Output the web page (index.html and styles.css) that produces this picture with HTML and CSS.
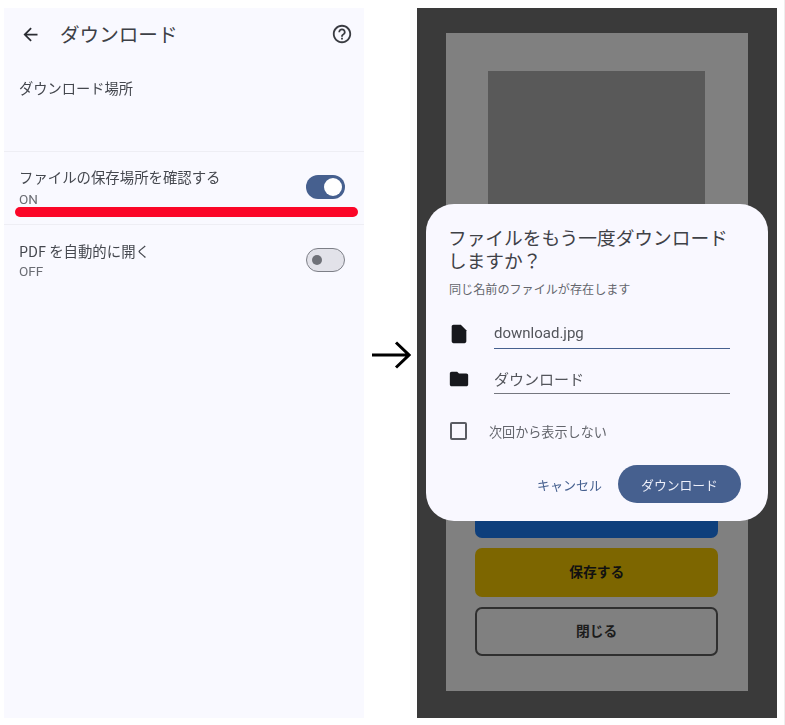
FILE: index.html
```html
<!DOCTYPE html>
<html lang="ja">
<head>
<meta charset="utf-8">
<title>ダウンロード</title>
<link rel="stylesheet" href="styles.css">
</head>
<body>
<main class="stage">
  <section class="settings">
    <header class="appbar">
      <svg class="back" viewBox="0 0 24 24"><path d="M20 11H7.83l5.59-5.59L12 4l-8 8 8 8 1.41-1.41L7.83 13H20z"/></svg>
      <h1 class="appbar-title">ダウンロード</h1>
      <svg class="help" viewBox="0 0 24 24"><path d="M11 18h2v-2h-2v2zm1-16C6.48 2 2 6.48 2 12s4.48 10 10 10 10-4.48 10-10S17.52 2 12 2zm0 18c-4.41 0-8-3.59-8-8s3.59-8 8-8 8 3.59 8 8-3.59 8-8 8zm0-14c-2.21 0-4 1.79-4 4h2c0-1.1.9-2 2-2s2 .9 2 2c0 2-3 1.75-3 5h2c0-2.25 3-2.5 3-5 0-2.21-1.79-4-4-4z"/></svg>
    </header>
    <div class="location">ダウンロード場所</div>
    <div class="row row-on">
      <div class="row-text">
        <div class="row-title">ファイルの保存場所を確認する</div>
        <div class="row-sub">ON</div>
      </div>
      <span class="toggle toggle-on"><span class="thumb"></span></span>
      <span class="marker"></span>
    </div>
    <div class="row row-off">
      <div class="row-text">
        <div class="row-title">PDF を自動的に開く</div>
        <div class="row-sub">OFF</div>
      </div>
      <span class="toggle toggle-off"><span class="thumb"></span></span>
    </div>
  </section>

  <div class="arrow-wrap">
    <svg class="arrow" viewBox="0 0 40 30"><path d="M1 15H38M25 2.5 38 15 25 27.5"/></svg>
  </div>

  <section class="phone">
    <div class="screen">
      <div class="picture"></div>
      <div class="actions">
        <div class="btn btn-blue"></div>
        <div class="btn btn-yellow">保存する</div>
        <div class="btn btn-outline">閉じる</div>
      </div>
    </div>
    <div class="dialog">
      <h2 class="dialog-title">ファイルをもう一度ダウンロードしますか？</h2>
      <p class="dialog-sub">同じ名前のファイルが存在します</p>
      <div class="field field-file">
        <svg class="field-icon" viewBox="0 0 24 24"><path d="M14 2H6c-1.1 0-2 .9-2 2v16c0 1.1.9 2 2 2h12c1.1 0 2-.9 2-2V8l-6-6z"/></svg>
        <span class="field-value value-active">download.jpg</span>
      </div>
      <div class="field field-folder">
        <svg class="field-icon" viewBox="0 0 24 24"><path d="M10 4H4c-1.1 0-2 .9-2 2v12c0 1.1.9 2 2 2h16c1.1 0 2-.9 2-2V8c0-1.1-.9-2-2-2h-8l-2-2z"/></svg>
        <span class="field-value">ダウンロード</span>
      </div>
      <div class="check-row">
        <span class="checkbox"></span>
        <span class="check-label">次回から表示しない</span>
      </div>
      <div class="dialog-actions">
        <span class="cancel">キャンセル</span>
        <span class="confirm">ダウンロード</span>
      </div>
    </div>
  </section>
</main>
</body>
</html>
```

FILE: styles.css
```css
* { box-sizing: border-box; }
html, body { margin: 0; height: 100%; background: #fff; overflow: hidden; }
body { font-family: "Noto Sans CJK JP", "Noto Sans", sans-serif; color: #44474e; }

.stage { display: flex; align-items: flex-start; width: 785px; padding: 8px 0 0 4px; height: 725px; border-right: 1px solid #eeeeee; filter: blur(0.55px); }

/* Left: settings */
.settings { width: 360px; height: 710px; background: #f9f9ff; flex: none; }
.appbar { display: flex; align-items: center; height: 52px; padding: 0 12px 0 16px; }
.back { width: 21px; height: 21px; fill: #2b2d33; flex: none; }
.appbar-title { margin: 0 0 0 19px; font-size: 19.6px; font-weight: 400; line-height: 52px; color: #3d4046; flex: 1; }
.help { width: 22px; height: 22px; fill: #3a3c42; flex: none; margin-right: -1px; }
.location { height: 92px; padding: 17px 0 0 15px; font-size: 14.25px; line-height: 22px; border-bottom: 1px solid #eeeef4; }
.row { position: relative; display: flex; justify-content: space-between; padding: 0 19px 0 15px; }
.row-on { height: 73px; padding-top: 14px; border-bottom: 1px solid #eeeef4; }
.row-off { padding-top: 15px; }
.row-title { font-size: 14.4px; line-height: 22px; }
.row-sub { font-size: 13.5px; line-height: 16px; color: #6a6c73; font-family: "Roboto", sans-serif; }
.row-on .row-sub { margin-top: 3px; }
.row-off .row-sub { margin-top: 1px; }

.toggle { display: flex; align-items: center; width: 39px; height: 24px; border-radius: 12px; flex: none; }
.row-on .toggle { margin-top: 9px; }
.row-off .toggle { margin-top: 8px; }
.toggle-on { background: #46608f; justify-content: flex-end; padding-right: 3px; }
.toggle-on .thumb { width: 18px; height: 18px; border-radius: 50%; background: #fff; }
.toggle-off { background: #e2e2e9; border: 1.5px solid #7d7f87; padding-left: 5px; }
.toggle-off .thumb { width: 10px; height: 10px; border-radius: 50%; background: #6f7178; }

.marker { position: absolute; left: 11px; right: 6px; top: 55px; height: 10px; border-radius: 5px; background: #fb0628; }

/* Arrow */
.arrow-wrap { width: 52.5px; flex: none; display: flex; justify-content: center; padding: 332px 0 0 2px; }
.arrow { width: 40px; height: 30px; fill: none; stroke: #000; stroke-width: 3; }

/* Right: dimmed phone */
.phone { position: relative; width: 360.5px; height: 710px; flex: none; background: #3a3a3a; padding: 25px 29.5px 0; }
.screen { display: flex; flex-direction: column; align-items: center; height: 658px; background: #808080; padding: 38px 0 35px; }
.picture { width: 217px; height: 300px; background: #595959; flex: none; }
.actions { margin-top: auto; width: 243px; display: flex; flex-direction: column; gap: 10px; }
.btn { display: flex; align-items: center; justify-content: center; height: 49px; padding-bottom: 4px; border-radius: 7px; font-size: 13.75px; font-weight: 700; color: #111; }
.btn-blue { background: #0e3f7c; }
.btn-yellow { background: #7d6600; }
.btn-outline { border: 2px solid #2f2f2f; color: #1c1c1c; }

/* Dialog */
.dialog { position: absolute; left: 9.5px; top: 196px; width: 342px; height: 317px; padding: 21px 24px 0 22px; border-radius: 28px; background: #f9f8ff; }
.dialog-title { margin: 0; width: 290px; font-size: 18.7px; font-weight: 400; line-height: 23px; color: #3f4147; }
.dialog-sub { margin: 9px 0 0 1px; font-size: 12.1px; line-height: 18px; color: #63656c; }
.field { display: flex; align-items: center; height: 45px; }
.field-file { margin-top: 6px; }
.field-icon { width: 22px; height: 22px; margin: 14px 24px 0 0; fill: #17181d; flex: none; }
.field-value { flex: 1; height: 100%; margin-right: 14px; display: flex; align-items: center; padding-top: 14px; font-size: 15px; border-bottom: 1px solid #75777f; color: #53555b; }
.value-active { font-family: "Roboto", sans-serif; font-size: 15px; border-bottom: 1.5px solid #46608f; }
.check-row { display: flex; align-items: center; margin-top: 25px; height: 24px; }
.checkbox { width: 17px; height: 18px; margin-left: 2px; border: 2px solid #5a5c63; border-radius: 2px; flex: none; }
.check-label { margin-left: 22px; font-size: 13.1px; color: #63656c; }
.dialog-actions { display: flex; align-items: center; justify-content: flex-end; margin-top: 22px; margin-right: 3px; }
.cancel { font-size: 13px; color: #46608f; margin-right: 16px; }
.confirm { display: flex; align-items: center; justify-content: center; width: 123px; height: 38px; border-radius: 19px; background: #46608f; color: #eef0fa; font-size: 12.8px; }
```
